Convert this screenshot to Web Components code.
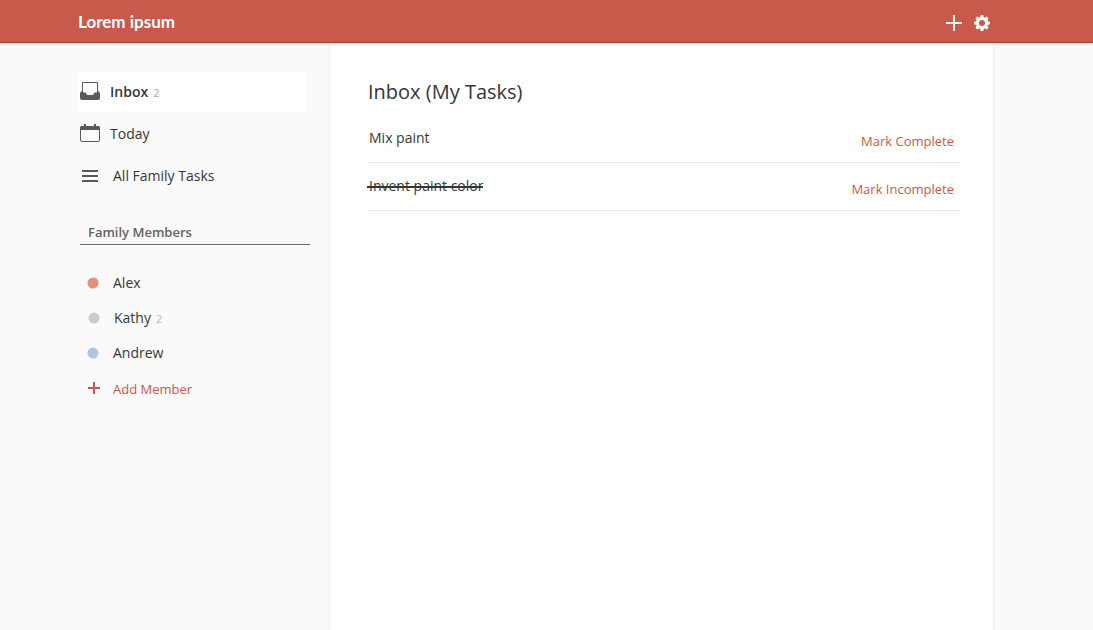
<!DOCTYPE html>
<html lang="en">
<head>
<meta charset="utf-8">
<meta name="viewport" content="width=device-width, initial-scale=1">
<title>Inbox (My Tasks)</title>
<style>
  html { height: 100%; }
  body {
    margin: 0;
    min-height: 100%;
    display: flex;
    background: #fafafa;
    color: #363636;
    font: 14px/20px "Open Sans", "Noto Sans", sans-serif;
    --accent: #c8594b;
    --pad-left: 77px;
    --pad-right: 99px;
  }
</style>
</head>
<body>
<task-app></task-app>

<template id="t-app">
  <style>
    :host { flex: 1; display: flex; flex-direction: column; min-width: 0; }
    .columns {
      flex: 1;
      display: grid;
      grid-template-columns: 252px minmax(0, 1fr);
      padding: 0 var(--pad-right) 0 var(--pad-left);
    }
    aside { padding: 29px 19px 20px 0; }
    nav { display: grid; gap: 2px; }
    main {
      background: #fff;
      border: solid #eee;
      border-width: 0 1px;
      padding: 35px 33px 20px 38px;
    }
    h1 { margin: 0; font-size: 20px; line-height: 28px; font-weight: 400; }
    h2 {
      margin: 26px 0 20px 3px;
      padding: 0 8px 2px;
      width: 214px;
      border-bottom: 1px solid #6c6c6c;
      font-size: 13px;
      line-height: 20px;
      font-weight: 600;
      color: #636363;
    }
    ul { list-style: none; margin: 0; padding: 0; }
    .tasks { margin-top: 9px; }
  </style>
  <app-header>Lorem ipsum</app-header>
  <div class="columns">
    <aside>
      <nav>
        <nav-item active count="2">
          <svg slot="icon" width="20" height="20" viewBox="0 0 20 20"><path d="M2.500 12V.5H17.500V12" fill="#fff" stroke="#5a5a5a"/><path d="M2 8.500L0 11V16Q0 18 2 18H18Q20 18 20 16V11L18 8.500V10.500H14.500L13 13H7L5.500 10.500H2Z" fill="#5a5a5a"/></svg>
          Inbox
        </nav-item>
        <nav-item>
          <svg slot="icon" width="20" height="20" viewBox="0 0 20 20"><path d="M0 6V4Q0 2 2 2H4V0H6V2H14V0H16V2H18Q20 2 20 4V6Z" fill="#5a5a5a"/><rect x=".5" y="2.500" width="19" height="15" rx="1.500" fill="none" stroke="#5a5a5a"/></svg>
          Today
        </nav-item>
        <nav-item wide>
          <svg slot="icon" width="20" height="20" viewBox="0 0 20 20"><path d="M2 5H18M2 10H18M2 15H18" stroke="#525a5e" stroke-width="2"/></svg>
          All Family Tasks
        </nav-item>
      </nav>
      <h2>Family Members</h2>
      <ul>
        <li><member-item style="--dot:#e98f77">Alex</member-item></li>
        <li><member-item style="--dot:#cbcbcb" count="2">Kathy</member-item></li>
        <li><member-item style="--dot:#adc6e2">Andrew</member-item></li>
      </ul>
      <add-member>Add Member</add-member>
    </aside>
    <main>
      <h1>Inbox (My Tasks)</h1>
      <ul class="tasks">
        <li><task-row>Mix paint</task-row></li>
        <li><task-row done>Invent paint color</task-row></li>
      </ul>
    </main>
  </div>
</template>

<template id="t-header">
  <style>
    :host { display: block; position: relative; }
    header {
      display: flex;
      align-items: center;
      height: 42px;
      padding: 0 101px 0 78px;
      background: #c8594b;
      border-bottom: 1px solid #b23a2d;
      box-shadow: 0 1px 3px rgba(0, 0, 0, .14);
      color: #fff;
    }
    .brand { flex: 1; font: 700 17px/24px Lato, "Open Sans", sans-serif; padding-top: 2px; }
    a { color: inherit; text-decoration: none; }
    .tools { display: flex; gap: 8px; padding-top: 4px; }
    button { display: flex; padding: 0; border: 0; background: none; color: inherit; cursor: pointer; }
  </style>
  <header>
    <div class="brand"><a href="#home"><slot></slot></a></div>
    <div class="tools">
      <button type="button" aria-label="Add task"><svg width="20" height="20" viewBox="0 0 20 20"><path d="M2 10H18M10 2V18" stroke="#fff" stroke-width="2"/></svg></button>
      <button type="button" aria-label="Settings"><svg width="20" height="20" viewBox="0 0 20 20" fill="#fff"><path d="M8 5L8.700 2H11.300L12 5V15L11.300 18H8.700L8 15Z"/><path d="M8 5L8.700 2H11.300L12 5V15L11.300 18H8.700L8 15Z" transform="rotate(45 10 10)"/><path d="M8 5L8.700 2H11.300L12 5V15L11.300 18H8.700L8 15Z" transform="rotate(90 10 10)"/><path d="M8 5L8.700 2H11.300L12 5V15L11.300 18H8.700L8 15Z" transform="rotate(135 10 10)"/><circle cx="10" cy="10" r="6"/><circle cx="10" cy="10" r="3" fill="#c8594b"/></svg></button>
    </div>
  </header>
</template>

<template id="t-nav">
  <style>
    :host { display: block; }
    a {
      display: flex;
      align-items: center;
      gap: 10px;
      width: 227px;
      height: 40px;
      padding-left: 3px;
      border-radius: 2px;
      color: inherit;
      text-decoration: none;
    }
    :host([wide]) a { gap: 13px; }
    :host([active]) a { background: #fff; font-weight: 600; }
    ::slotted(svg) { display: block; }
    .count { font-size: 11px; font-weight: 400; color: #aaa; margin-left: -5px; padding-top: 2px; }
    .count:empty { display: none; }
  </style>
  <a href="#list"><slot name="icon"></slot><span><slot></slot></span><span class="count"></span></a>
</template>

<template id="t-member">
  <style>
    :host { display: block; }
    a {
      display: flex;
      align-items: center;
      height: 35px;
      padding-left: 10px;
      color: inherit;
      text-decoration: none;
    }
    :host([count]) a { padding-left: 11px; }
    svg { margin-right: 14px; }
    circle { fill: var(--dot); }
    .count { font-size: 11px; color: #bbb; margin-left: 5px; padding-top: 2px; }
  </style>
  <a href="#member"><svg width="12" height="12" viewBox="0 0 12 12"><circle cx="6" cy="6" r="5.500"/></svg><span><slot></slot></span><span class="count"></span></a>
</template>

<template id="t-add">
  <style>
    :host { display: block; }
    button {
      display: flex;
      align-items: center;
      gap: 13px;
      height: 36px;
      padding: 0 0 0 11px;
      border: 0;
      background: none;
      color: var(--accent);
      font: inherit;
      font-size: 13px;
      cursor: pointer;
    }
    span { padding-top: 2px; }
  </style>
  <button type="button"><svg width="12" height="12" viewBox="0 0 12 12"><path d="M0 6H12M6 0V12" stroke="#c8594b" stroke-width="2"/></svg><span><slot></slot></span></button>
</template>

<template id="t-task">
  <style>
    :host { display: block; }
    .row {
      display: flex;
      justify-content: space-between;
      align-items: center;
      height: 46px;
      padding: 0 6px 1px 1px;
      border-bottom: 1px solid #ebebeb;
    }
    .name { position: relative; text-decoration: none; }
    s.name::after {
      content: "";
      position: absolute;
      left: -2px;
      right: 0;
      top: 10px;
      height: 2px;
      background: #363636;
    }
    button { padding: 6px 0 0; border: 0; background: none; color: var(--accent); font: inherit; font-size: 13px; cursor: pointer; }
  </style>
  <div class="row"></div>
</template>

<script>
  class Base extends HTMLElement {
    connectedCallback() {
      if (this.shadowRoot) return;
      const root = this.attachShadow({ mode: "open" });
      root.append(document.getElementById(this.constructor.template).content.cloneNode(true));
      this.ready(root);
    }
    ready(root) {
      const count = root.querySelector(".count");
      if (count) count.textContent = this.getAttribute("count") || "";
    }
  }
  customElements.define("app-header", class extends Base { static template = "t-header"; });
  customElements.define("nav-item", class extends Base { static template = "t-nav"; });
  customElements.define("member-item", class extends Base { static template = "t-member"; });
  customElements.define("add-member", class extends Base { static template = "t-add"; });
  customElements.define("task-row", class extends Base {
    static template = "t-task";
    ready(root) {
      const done = this.hasAttribute("done");
      const name = document.createElement(done ? "s" : "span");
      name.className = "name";
      name.append(document.createElement("slot"));
      const button = document.createElement("button");
      button.type = "button";
      button.textContent = done ? "Mark Incomplete" : "Mark Complete";
      root.querySelector(".row").append(name, button);
    }
  });
  customElements.define("task-app", class extends Base { static template = "t-app"; });
</script>
</body>
</html>
